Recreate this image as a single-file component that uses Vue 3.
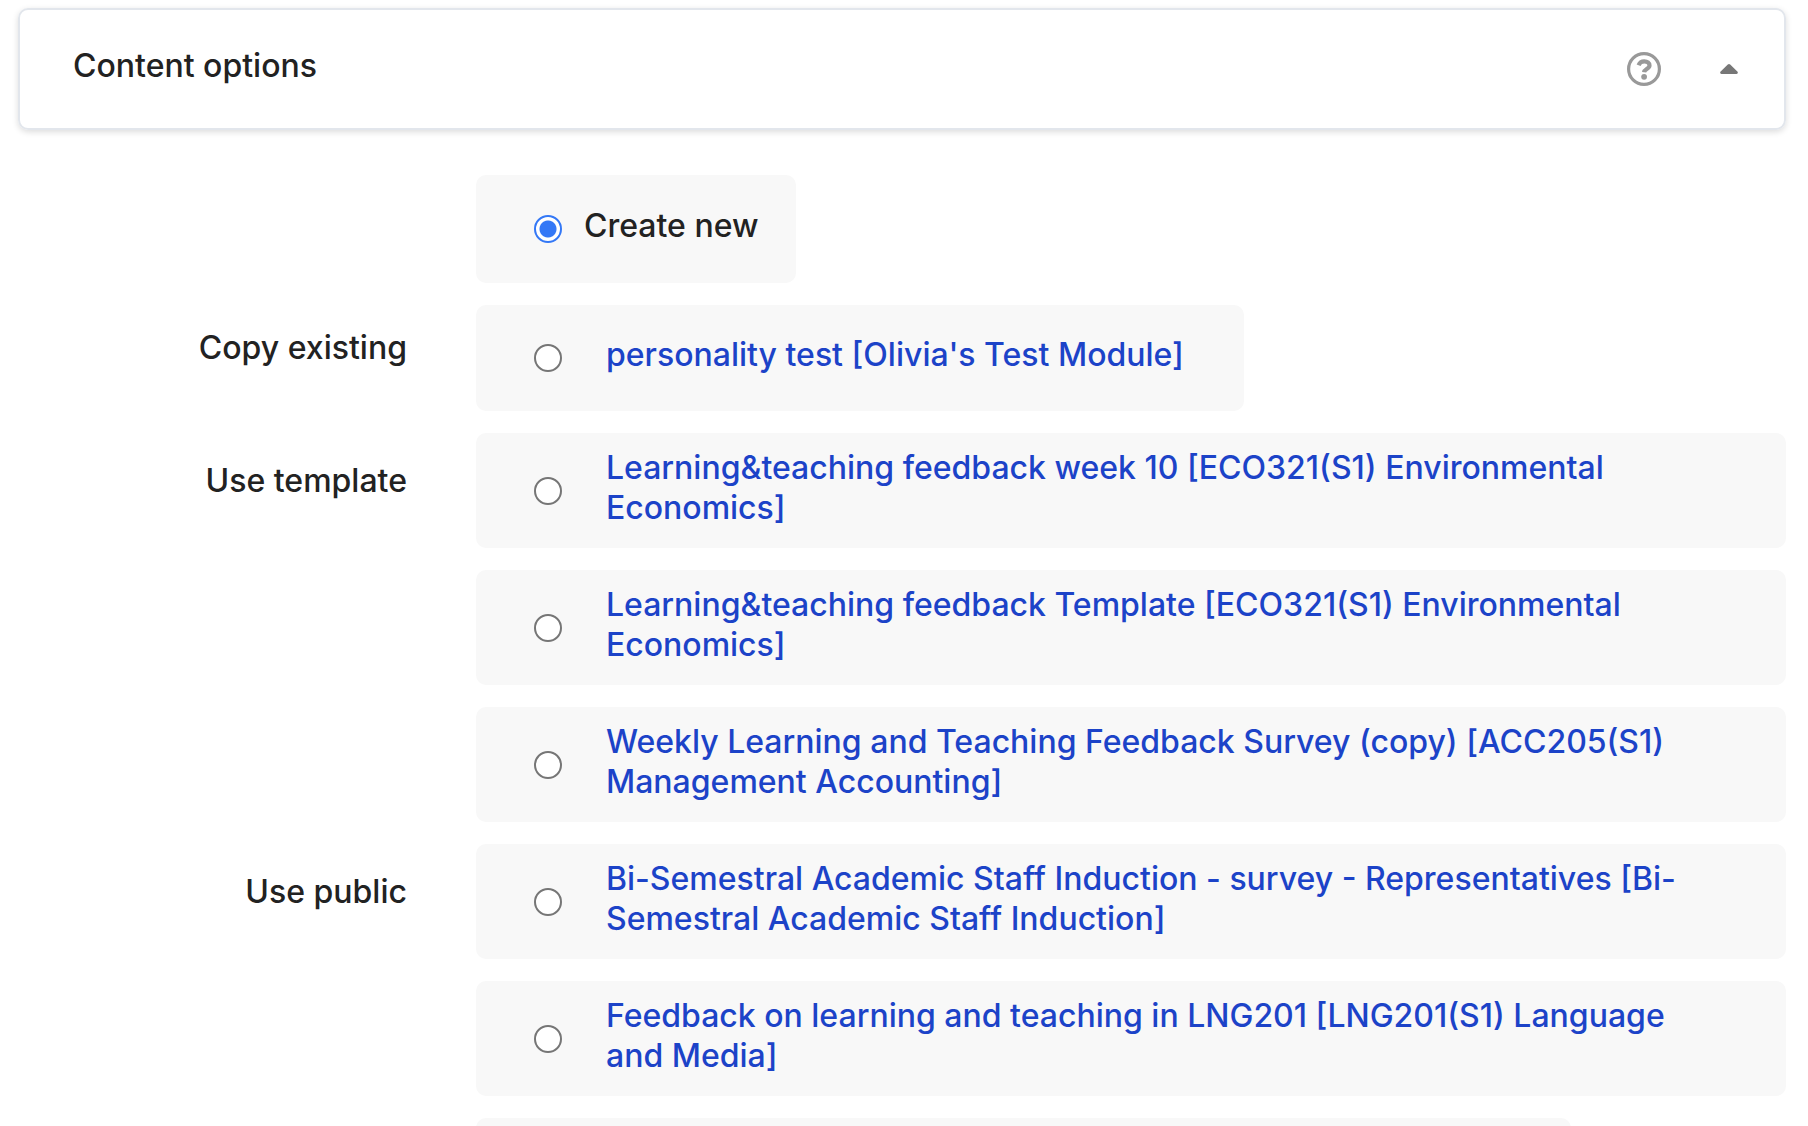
<script setup>
import { ref } from 'vue'

const selected = ref('new')

const rows = [
  { id: 'new', group: '', text: 'Create new', plain: true },
  { id: 'copy-1', group: 'Copy existing', text: "personality test [Olivia's Test Module]" },
  { id: 'tpl-1', group: 'Use template', text: 'Learning&teaching feedback week 10 [ECO321(S1) Environmental Economics]', tall: true },
  { id: 'tpl-2', group: '', text: 'Learning&teaching feedback Template [ECO321(S1) Environmental Economics]', tall: true },
  { id: 'tpl-3', group: '', text: 'Weekly Learning and Teaching Feedback Survey (copy) [ACC205(S1) Management Accounting]', tall: true },
  { id: 'pub-1', group: 'Use public', text: 'Bi-Semestral Academic Staff Induction - survey - Representatives [Bi-Semestral Academic Staff Induction]', tall: true },
  { id: 'pub-2', group: '', text: 'Feedback on learning and teaching in LNG201 [LNG201(S1) Language and Media]', tall: true },
]
</script>

<template>
  <main class="page">
    <header class="panel">
      <h2 class="title">Content options</h2>
      <button class="icon-button help" type="button" aria-label="Help">
        <svg width="34" height="34" viewBox="0 0 34 34" fill="none">
          <circle cx="17" cy="17" r="15.4" stroke="#999" stroke-width="3.2" />
          <path d="M11.6 13.2C12.6 10.6 14.6 9.4 17.3 9.4c3.1 0 5.2 1.6 5.2 4.1 0 3.4-5.1 3.6-5.4 6.7" stroke="#999" stroke-width="4.2" />
          <circle cx="17.1" cy="24.8" r="2.9" fill="#999" />
        </svg>
      </button>
      <button class="icon-button" type="button" aria-label="Collapse">
        <svg width="18" height="10" viewBox="0 0 18 10">
          <path d="M9 0Q9.6 0 10.2 0.6L17.6 7.8Q18.4 9.8 16.6 10H1.4Q-0.4 9.8 0.4 7.8L7.8 0.6Q8.4 0 9 0Z" fill="#777" />
        </svg>
      </button>
    </header>

    <form class="options">
      <div v-for="row in rows" :key="row.id" class="row">
        <span class="group">{{ row.group }}</span>
        <div class="option" :class="{ plain: row.plain, tall: row.tall }">
          <input :id="row.id" v-model="selected" class="radio" type="radio" name="source" :value="row.id" :aria-label="row.text" />
          <label v-if="row.plain" class="text" :for="row.id">{{ row.text }}</label>
          <a v-else class="text" href="#">{{ row.text }}</a>
        </div>
      </div>
      <div class="row">
        <span class="group"></span>
        <div class="option next"></div>
      </div>
    </form>
  </main>
</template>

<style>
body {
  background: #fff;
}
</style>

<style scoped>
.page {
  box-sizing: border-box;
  height: 100vh;
  overflow: hidden;
  padding: 8px 22px 0 18px;
  font-family: Inter, "Liberation Sans", sans-serif;
  font-size: 32px;
  font-weight: 500;
  line-height: 40px;
  color: #222;
}

.panel {
  box-sizing: border-box;
  display: flex;
  align-items: center;
  min-height: 122px;
  padding: 0 46px 0 53px;
  border: 2px solid #e2e6ec;
  border-radius: 10px;
  box-shadow: 0 2px 6px rgba(0, 0, 0, 0.14);
}

.title {
  flex: 1;
  margin: 0 0 6px;
  font: inherit;
}

.icon-button {
  display: flex;
  padding: 0;
  border: 0;
  background: none;
}

.help {
  margin-right: 59px;
}

.options {
  display: flex;
  flex-direction: column;
  gap: 22px;
  margin-top: 45px;
}

.row {
  display: grid;
  grid-template-columns: 22% 1fr;
  column-gap: 69px;
  align-items: center;
}

.group {
  margin-bottom: 20px;
  text-align: right;
}

.option {
  box-sizing: border-box;
  display: flex;
  align-items: center;
  justify-self: start;
  gap: 44px;
  min-height: 106px;
  padding: 0 60px 0 58px;
  border-radius: 10px;
  background: #f8f8f8;
}

.plain {
  gap: 22px;
  min-height: 108px;
  padding-right: 38px;
}

.tall {
  justify-self: stretch;
  min-height: 115px;
}

.next {
  justify-self: stretch;
  margin-right: 215px;
}

.radio {
  flex: none;
  box-sizing: border-box;
  width: 28px;
  height: 28px;
  margin: 0;
  appearance: none;
  border: 2px solid #767676;
  border-radius: 50%;
  background: #fff;
}

.radio:checked {
  border-color: #3478f6;
  background: radial-gradient(circle, #3478f6 8px, #fff 9px);
}

.text {
  margin-bottom: 6px;
  color: inherit;
  text-decoration: none;
}

a.text {
  color: #1c43c8;
}
</style>
